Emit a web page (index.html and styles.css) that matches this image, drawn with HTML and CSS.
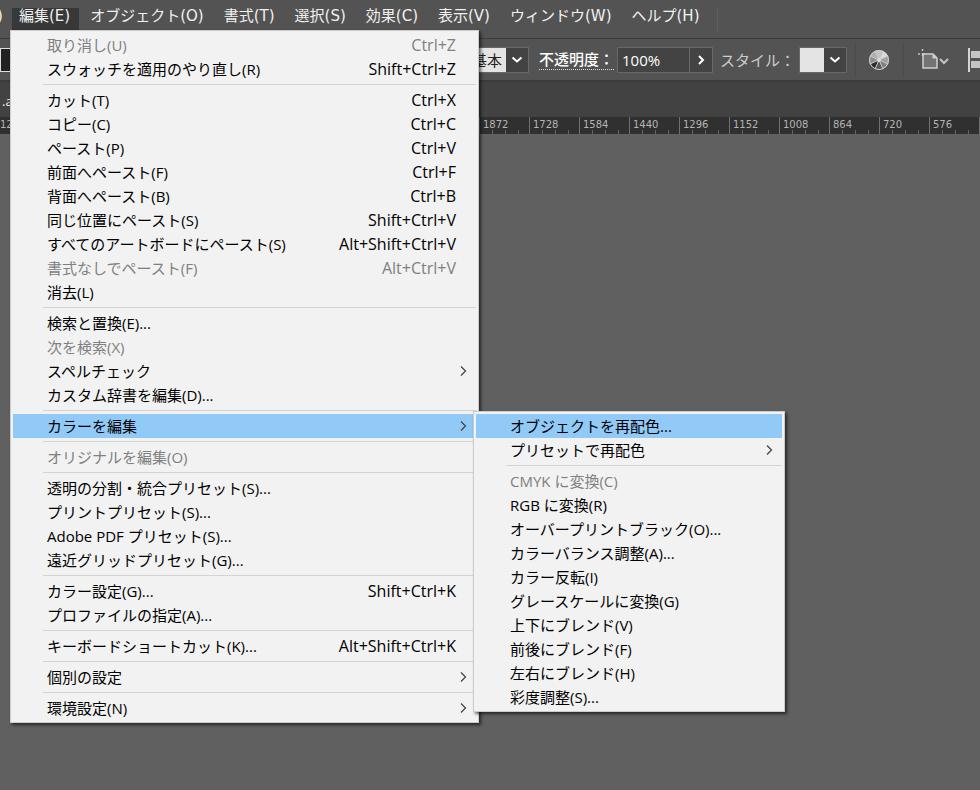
FILE: index.html
```html
<!DOCTYPE html>
<html lang="ja">
<head>
  <meta charset="UTF-8" />
  <meta name="viewport" content="width=device-width, initial-scale=1.0"/>
  <title>編集メニュー</title>
  <link rel="stylesheet" href="styles.css">
</head>
<body>
  <nav class="menubar">
    <button class="menubar-item first">)</button>
    <button class="menubar-item active">編集(E)</button>
    <button class="menubar-item">オブジェクト(O)</button>
    <button class="menubar-item">書式(T)</button>
    <button class="menubar-item">選択(S)</button>
    <button class="menubar-item">効果(C)</button>
    <button class="menubar-item">表示(V)</button>
    <button class="menubar-item">ウィンドウ(W)</button>
    <button class="menubar-item">ヘルプ(H)</button>
    <span class="menubar-end"></span>
  </nav>

  <div class="toolbar">
    <div class="fill-box"></div>
    <div class="combo">
      <span class="combo-light">基本</span>
      <button class="combo-btn" aria-label="ブラシ"><svg width="12" height="8" viewBox="0 0 12 8"><path d="M1.5 1.5 6 5.5 10.5 1.5"/></svg></button>
    </div>
    <label class="opacity-label" for="opacity">不透明度：</label>
    <div class="combo">
      <input class="opacity" id="opacity" type="text" value="100%">
      <button class="combo-btn" aria-label="不透明度を選択"><svg width="8" height="12" viewBox="0 0 8 12"><path d="M2 2 6 6 2 10"/></svg></button>
    </div>
    <span class="style-label">スタイル：</span>
    <div class="combo">
      <span class="combo-light swatch"></span>
      <button class="combo-btn" aria-label="スタイル"><svg width="12" height="8" viewBox="0 0 12 8"><path d="M1.5 1.5 6 5.5 10.5 1.5"/></svg></button>
    </div>
    <span class="divider"></span>
    <button class="tool recolor" aria-label="オブジェクトを再配色">
      <svg width="22" height="22" viewBox="0 0 22 22">
        <circle cx="11" cy="11" r="10" fill="#8c8c8c"/>
        <path d="M11 11 7 2A10 10 0 0 1 15 2Z" fill="#c4c4c4"/>
        <path d="M11 11 15 2A10 10 0 0 1 20 7Z" fill="#dadada"/>
        <path d="M11 11 20 7A10 10 0 0 1 20 15Z" fill="#a0a0a0"/>
        <path d="M11 11 2 7A10 10 0 0 1 7 2Z" fill="#b0b0b0"/>
        <path d="M11 11 2 15A10 10 0 0 1 2 7Z" fill="#8c8c8c"/>
        <path d="M11 11 7 20A10 10 0 0 1 2 15Z" fill="#2c2c2c"/>
        <path d="M11 11 15 20A10 10 0 0 1 7 20Z" fill="#585858"/>
        <path d="M11 11 20 15A10 10 0 0 1 15 20Z" fill="#808080"/>
        <path d="M2 7 20 15M2 15 20 7M7 2 15 20M15 2 7 20" stroke="#c8c8c8"/>
        <circle cx="11" cy="11" r="9.5" fill="none" stroke="#d0d0d0"/>
        <circle cx="11" cy="11" r="2" fill="#dcdcdc"/>
      </svg>
    </button>
    <span class="divider"></span>
    <button class="tool artboard" aria-label="アートボード">
      <svg width="32" height="22" viewBox="0 0 32 22">
        <path d="M4.500 0V2M4.500 4V7M0 5H2M4 5H7" stroke="#c4c4c4" stroke-width="1.5"/>
        <path d="M5 5H15L19 9V19H5Z" fill="#747474" stroke="#d0d0d0" stroke-width="1.5"/>
        <path d="M14.5 5V9.5H19Z" fill="#d0d0d0"/>
        <path d="M22 10 26 14 30 10" fill="none" stroke="#c4c4c4" stroke-width="2"/>
      </svg>
    </button>
    <button class="tool" aria-label="整列">
      <svg width="14" height="24" viewBox="0 0 14 24">
        <path d="M1 0V24" stroke="#d4d4d4" stroke-width="2"/>
        <path d="M3 3H14V10H3ZM3 13H14V20H3Z" fill="#c4c4c4"/>
      </svg>
    </button>
  </div>

  <div class="tabbar">.a</div>

  <div class="ruler">
    <span class="mark start">12</span>
    <span class="mark">1872</span>
    <span class="mark">1728</span>
    <span class="mark">1584</span>
    <span class="mark">1440</span>
    <span class="mark">1296</span>
    <span class="mark">1152</span>
    <span class="mark">1008</span>
    <span class="mark">864</span>
    <span class="mark">720</span>
    <span class="mark">576</span>
    <span class="mark"></span>
  </div>

  <!-- Edit menu -->
  <div class="menu edit-menu" role="menu">
    <button class="item" disabled>取り消し(U)<kbd>Ctrl+Z</kbd></button>
    <button class="item">スウォッチを適用のやり直し(R)<kbd>Shift+Ctrl+Z</kbd></button>
    <hr>
    <button class="item">カット(T)<kbd>Ctrl+X</kbd></button>
    <button class="item">コピー(C)<kbd>Ctrl+C</kbd></button>
    <button class="item">ペースト(P)<kbd>Ctrl+V</kbd></button>
    <button class="item">前面へペースト(F)<kbd>Ctrl+F</kbd></button>
    <button class="item">背面へペースト(B)<kbd>Ctrl+B</kbd></button>
    <button class="item">同じ位置にペースト(S)<kbd>Shift+Ctrl+V</kbd></button>
    <button class="item">すべてのアートボードにペースト(S)<kbd>Alt+Shift+Ctrl+V</kbd></button>
    <button class="item" disabled>書式なしでペースト(F)<kbd>Alt+Ctrl+V</kbd></button>
    <button class="item">消去(L)</button>
    <hr>
    <button class="item">検索と置換(E)...</button>
    <button class="item" disabled>次を検索(X)</button>
    <button class="item sub">スペルチェック<svg width="8" height="12" viewBox="0 0 8 12"><path d="M2 1.5 6.5 6 2 10.5"/></svg></button>
    <button class="item">カスタム辞書を編集(D)...</button>
    <hr>
    <button class="item sub selected">カラーを編集<svg width="8" height="12" viewBox="0 0 8 12"><path d="M2 1.5 6.5 6 2 10.5"/></svg></button>
    <hr>
    <button class="item" disabled>オリジナルを編集(O)</button>
    <hr>
    <button class="item">透明の分割・統合プリセット(S)...</button>
    <button class="item">プリントプリセット(S)...</button>
    <button class="item">Adobe PDF プリセット(S)...</button>
    <button class="item">遠近グリッドプリセット(G)...</button>
    <hr>
    <button class="item">カラー設定(G)...<kbd>Shift+Ctrl+K</kbd></button>
    <button class="item">プロファイルの指定(A)...</button>
    <hr>
    <button class="item">キーボードショートカット(K)...<kbd>Alt+Shift+Ctrl+K</kbd></button>
    <hr>
    <button class="item sub">個別の設定<svg width="8" height="12" viewBox="0 0 8 12"><path d="M2 1.5 6.5 6 2 10.5"/></svg></button>
    <hr>
    <button class="item sub">環境設定(N)<svg width="8" height="12" viewBox="0 0 8 12"><path d="M2 1.5 6.5 6 2 10.5"/></svg></button>
  </div>

  <!-- Edit colors submenu -->
  <div class="menu color-menu" role="menu">
    <button class="item selected">オブジェクトを再配色...</button>
    <button class="item sub">プリセットで再配色<svg width="8" height="12" viewBox="0 0 8 12"><path d="M2 1.5 6.5 6 2 10.5"/></svg></button>
    <hr>
    <button class="item" disabled>CMYK に変換(C)</button>
    <button class="item">RGB に変換(R)</button>
    <button class="item">オーバープリントブラック(O)...</button>
    <button class="item">カラーバランス調整(A)...</button>
    <button class="item">カラー反転(I)</button>
    <button class="item">グレースケールに変換(G)</button>
    <button class="item">上下にブレンド(V)</button>
    <button class="item">前後にブレンド(F)</button>
    <button class="item">左右にブレンド(H)</button>
    <button class="item">彩度調整(S)...</button>
  </div>
</body>
</html>
```

FILE: styles.css
```css
* {
  box-sizing: border-box;
}

body {
  margin: 0;
  min-height: 100vh;
  background: #606060;
  font-family: "Open Sans", "Noto Sans CJK JP", sans-serif;
  font-size: 15px;
  color: #f0f0f0;
  overflow: hidden;
  position: relative;
}

button {
  margin: 0;
  padding: 0;
  border: none;
  background: none;
  color: inherit;
  font: inherit;
  white-space: nowrap;
}

/* Menu bar */
.menubar {
  display: flex;
  gap: 4px;
  height: 39px;
  padding-top: 8px;
  background: #535353;
  border-bottom: 1px solid #3c3c3c;
  font-family: "DejaVu Sans", "Noto Sans CJK JP", sans-serif;
}

.menubar-item {
  height: 22px;
  padding: 0 9px 6px 7px;
  line-height: 16px;
}

.menubar-item.first {
  display: flex;
  justify-content: center;
  width: 8px;
  padding: 0 8px 6px 0;
}

.menubar-item.active {
  background: #383838;
}

.menubar-end {
  height: 24px;
  margin-left: 4px;
  border-left: 1px solid #606060;
}

/* Control bar */
.toolbar {
  display: flex;
  align-items: center;
  height: 43px;
  background: #535353;
  border-bottom: 2px solid #3a3a3a;
  white-space: nowrap;
}

.toolbar > * {
  flex-shrink: 0;
}

.fill-box {
  width: 460px;
  height: 24px;
  margin-right: 11px;
  background: #222;
  border: 1px solid #ddd;
}

.combo {
  display: flex;
  height: 26px;
  border: 1px solid #686868;
  background: #434343;
}

.combo-light {
  width: 34px;
  background: #e4e4e4;
  color: #222;
  line-height: 24px;
}

.swatch {
  width: 24px;
}

.combo-btn {
  width: 22px;
  display: flex;
  align-items: center;
  justify-content: center;
}

.combo-btn path {
  fill: none;
  stroke: #fff;
  stroke-width: 2;
}

.opacity-label {
  margin: 0 3px 0 10px;
  border-bottom: 1px dotted #ddd;
  color: #fff;
  font-weight: 500;
  line-height: 20px;
}

.opacity {
  width: 72px;
  padding: 0 4px;
  border: none;
  border-right: 1px solid #686868;
  background: #434343;
  color: #fff;
  font: inherit;
}

.style-label {
  margin: 0 4px 0 7px;
  color: #ccc;
}

.divider {
  width: 1px;
  height: 32px;
  margin: 0 12px 0 8px;
  background: #4a4a4a;
}

.tool {
  display: flex;
}

.recolor {
  margin-right: 5px;
}

.artboard {
  margin: 0 18px 0 2px;
}

/* Document tabs and ruler */
.tabbar {
  height: 35px;
  padding-left: 2px;
  background: #424242;
  font-size: 13px;
  line-height: 38px;
}

.ruler {
  display: flex;
  height: 17px;
  background: #303030;
  color: #b4b4b4;
  font-family: "DejaVu Sans", sans-serif;
  font-size: 10px;
  line-height: 15px;
  overflow: hidden;
}

.mark {
  flex: 0 0 50px;
  padding-left: 3px;
  border-left: 1px solid #707070;
  background: repeating-linear-gradient(to right, transparent 0 12px, #666 12px 13px) bottom / 100% 4px no-repeat;
}

.mark.start {
  flex-basis: 479px;
  padding-left: 0;
  border-left: none;
}

/* Drop-down menus */
.menu {
  position: absolute;
  padding: 2px;
  background: #f2f2f2;
  border: 1px solid #ccc;
  box-shadow: 2px 2px 3px rgba(0, 0, 0, 0.6);
  color: #000;
}

.edit-menu {
  top: 30px;
  left: 10px;
  width: 469px;
}

.color-menu {
  top: 411px;
  left: 473px;
  width: 312px;
}

.item {
  display: flex;
  align-items: center;
  width: 100%;
  height: 24px;
  padding: 0 20px 2px 34px;
  text-align: left;
}

.item:disabled {
  color: #808080;
}

.item.selected {
  background: #91c9f7;
}

.item kbd {
  margin-left: auto;
  padding-top: 2px;
  font: inherit;
  font-size: 16px;
}

.item.sub {
  padding-right: 9px;
}

.item svg {
  margin: 2px 0 0 auto;
}

.item path {
  fill: none;
  stroke: #444;
  stroke-width: 1.25;
}

hr {
  height: 1px;
  margin: 3px 0 3px 30px;
  border: none;
  background: #d4d4d4;
}
```
